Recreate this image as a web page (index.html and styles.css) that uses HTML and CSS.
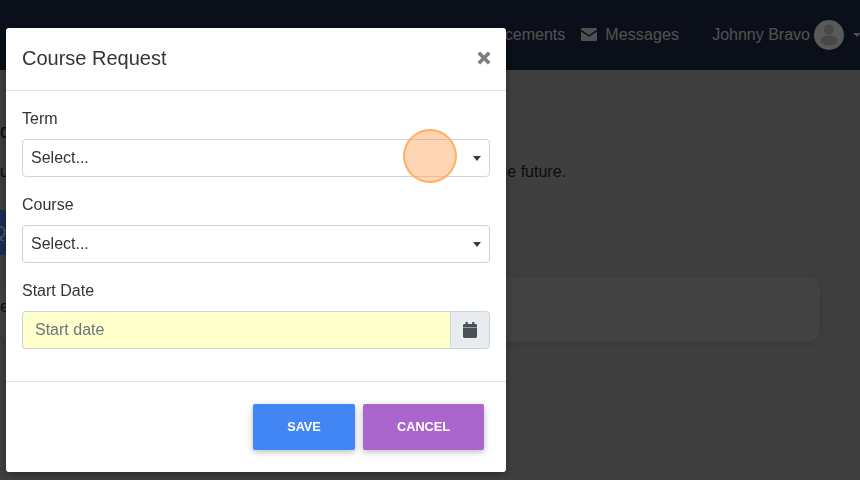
FILE: index.html
```html
<!DOCTYPE html>
<html lang="en">
<head>
<meta charset="utf-8">
<title>Course Request</title>
<link rel="stylesheet" href="styles.css">
</head>
<body>
<div class="page">
  <header class="navbar">
    <a class="nav-link">Announcements</a>
    <a class="nav-link nav-messages">
      <svg class="nav-icon" viewBox="0 0 16 13"><path d="M0 1.2C0 .5.5 0 1.2 0h13.6c.7 0 1.2.5 1.2 1.2v.5L8 7 0 1.7zM0 3.4v8.4c0 .7.5 1.2 1.2 1.2h13.6c.7 0 1.2-.5 1.2-1.2V3.4L8 8.7z"/></svg>
      Messages
    </a>
    <a class="nav-user">
      Johnny Bravo
      <span class="avatar">
        <svg viewBox="0 0 30 30"><circle cx="15" cy="9.500" r="5"/><ellipse cx="15" cy="20.500" rx="8.500" ry="5"/></svg>
      </span>
      <span class="caret"></span>
    </a>
  </header>
  <main class="content">
    <div class="line line-title">q</div>
    <div class="line line-intro"><span>u</span><span>e future.</span></div>
    <div class="request-btn">Q</div>
    <div class="card"><span>e</span></div>
  </main>
</div>

<div class="backdrop"></div>

<div class="modal-layer">
  <section class="modal">
    <header class="modal-header">
      <h2>Course Request</h2>
      <svg class="close" viewBox="0 0 12 12"><path d="M1.500 1.500l9 9M10.500 1.500l-9 9"/></svg>
    </header>
    <div class="modal-body">
      <div class="field">
        <label>Term</label>
        <div class="select">Select...<span class="select-caret"></span></div>
      </div>
      <div class="field">
        <label>Course</label>
        <div class="select">Select...<span class="select-caret"></span></div>
      </div>
      <div class="field">
        <label>Start Date</label>
        <div class="date">
          <div class="date-input">Start date</div>
          <div class="date-addon">
            <svg viewBox="0 0 14 16"><path d="M2.600 0h2.200v2H9.200V0h2.200v2h1.200C13.400 2 14 2.600 14 3.400V5H0V3.400C0 2.600.6 2 1.400 2h1.200zM0 5.600h14v9C14 15.400 13.400 16 12.600 16H1.400C.6 16 0 15.400 0 14.600z"/></svg>
          </div>
        </div>
      </div>
    </div>
    <footer class="modal-footer">
      <button class="btn btn-save">SAVE</button>
      <button class="btn btn-cancel">CANCEL</button>
    </footer>
  </section>
  <span class="click-marker"></span>
</div>
</body>
</html>
```
FILE: styles.css
```css
* { box-sizing: border-box; }
html, body { margin: 0; height: 100%; overflow: hidden; }
body {
  font-family: "Liberation Sans", Arial, sans-serif;
  font-size: 16px;
  color: #30353a;
  background: #b4b4b4;
}
.page { height: 480px; overflow: hidden; }
.navbar {
  height: 70px;
  background: #1d2b4a;
  display: flex;
  align-items: center;
  justify-content: flex-end;
  color: #e6e6e6;
  white-space: nowrap;
}
.nav-link { display: flex; align-items: center; }
.nav-messages { margin-left: 16px; letter-spacing: .12px; }
.nav-icon { width: 16px; height: 13px; fill: currentColor; margin-right: 8px; margin-top: -1px; }
.nav-user { display: flex; align-items: center; margin-left: 33px; margin-right: -1px; }
.avatar {
  width: 30px; height: 30px; border-radius: 50%;
  background: #fff; margin-left: 4px; overflow: hidden; display: block;
}
.avatar svg { display: block; width: 30px; height: 30px; fill: #cecece; }
.caret {
  margin-left: 9px;
  border-top: 4px solid #e6e6e6;
  border-left: 4px solid transparent;
  border-right: 4px solid transparent;
}
.content { padding-top: 50px; color: #212529; }
.line { height: 24px; line-height: 24px; white-space: nowrap; }
.line-title { font-size: 20px; margin-top: -1px; }
.line-intro { display: flex; justify-content: space-between; width: 566px; margin-top: 17px; }
.request-btn {
  width: 100px; height: 45px; margin-top: 26px; margin-left: -94px;
  background: #4285f4; color: #fff; border-radius: 3px;
  display: flex; align-items: center; justify-content: flex-end;
}
.card {
  width: 820px; height: 65px; margin-top: 22px;
  background: #bdbdbd; border-radius: 12px;
  box-shadow: 0 2px 6px rgba(0,0,0,.12);
  padding-top: 21px;
}
.backdrop { position: fixed; inset: 0; background: rgba(0,0,0,.65); }
.modal-layer { position: fixed; inset: 0; padding: 28px 0 0 6px; }
.modal {
  width: 500px; height: 444px; background: #fff; border-radius: 3px;
  box-shadow: 0 2px 8px rgba(0,0,0,.35);
  display: flex; flex-direction: column;
}
.modal-header {
  height: 63px; padding: 0 16px 2px;
  border-bottom: 1px solid #dee2e6;
  display: flex; align-items: center; justify-content: space-between;
}
.modal-header h2 { margin: 0; font-size: 20px; font-weight: 400; }
.close { width: 14px; height: 14px; stroke: #7f7f7f; stroke-width: 3.2; fill: none; margin-right: -1px; }
.modal-body { flex: 1; padding: 16px 16px 0; }
.field { margin-bottom: 16px; }
.field label { display: block; height: 24px; line-height: 24px; margin-bottom: 8px; }
.select {
  height: 38px; border: 1px solid #ced4da; border-radius: 4px;
  padding: 0 8px; display: flex; align-items: center; justify-content: space-between;
}
.select-caret {
  border-top: 5px solid #343a40;
  border-left: 4px solid transparent;
  border-right: 4px solid transparent;
}
.date { display: flex; height: 38px; }
.date-input {
  flex: 1; background: #ffffcc; color: #6c757d;
  border: 1px solid #ced4da; border-right: 0; border-radius: 4px 0 0 4px;
  padding: 0 12px; display: flex; align-items: center;
}
.date-addon {
  width: 40px; background: #e9ecef; border: 1px solid #ced4da; border-radius: 0 4px 4px 0;
  display: flex; align-items: center; justify-content: center;
}
.date-addon svg { width: 14px; height: 16px; fill: #495057; }
.modal-footer {
  height: 91px; border-top: 1px solid #dee2e6;
  padding: 22px 22px 0 0; display: flex; justify-content: flex-end; gap: 8px;
}
.btn {
  height: 46px; border: 0; border-radius: 2px; color: #fff;
  font: 700 12.700px "Liberation Sans", Arial, sans-serif;
  padding: 0;
  box-shadow: 0 2px 5px rgba(0,0,0,.16), 0 2px 10px rgba(0,0,0,.12);
}
.btn-save { width: 102px; background: #4285f4; }
.btn-cancel { width: 121px; background: #aa66cc; }
.click-marker {
  position: absolute; left: 403px; top: 129px;
  width: 54px; height: 54px; border-radius: 50%;
  background: rgba(255,152,64,.4);
  border: 2px solid rgba(255,170,90,.9);
}
```
